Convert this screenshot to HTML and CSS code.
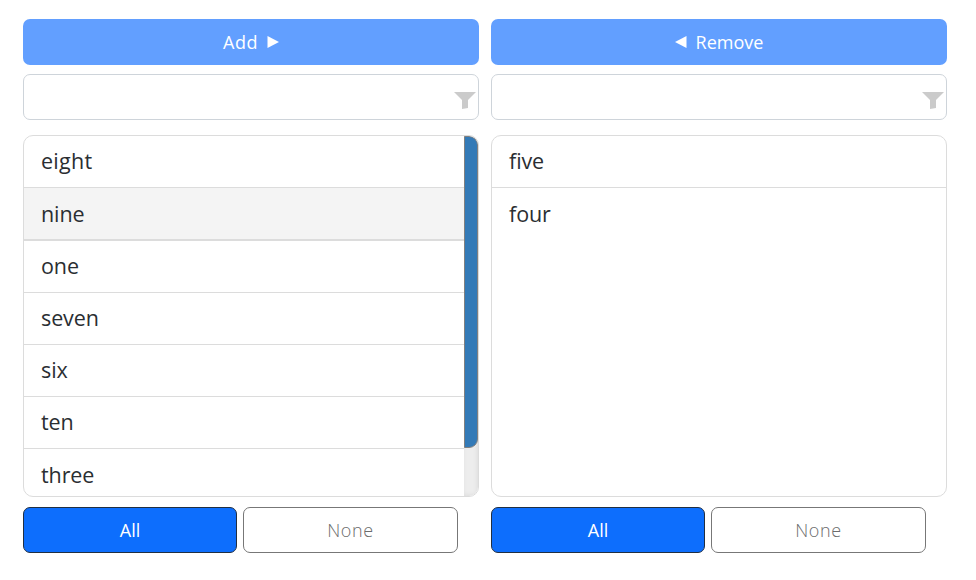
FILE: index.html
```html
<!DOCTYPE html>
<html lang="en">
<head>
<meta charset="utf-8">
<title>List picker</title>
<link rel="stylesheet" href="styles.css">
</head>
<body>
<main class="picker">
  <section class="panel">
    <button class="move"><span class="add-label">Add</span><svg class="arrow" viewBox="0 0 12 12"><path d="M.5 0 12 6 .5 12z"/></svg></button>
    <div class="filter">
      <input class="filter-input" type="text" aria-label="Filter">
      <svg class="funnel" viewBox="0 0 22 17"><path d="M0 0H22L14 8V16L8 17V8z"/></svg>
    </div>
    <div class="list">
      <ul class="items">
        <li class="item wide">eight</li>
        <li class="item active">nine</li>
        <li class="item">one</li>
        <li class="item">seven</li>
        <li class="item">six</li>
        <li class="item">ten</li>
        <li class="item last">three</li>
      </ul>
      <div class="track"><div class="thumb"></div></div>
    </div>
    <div class="actions">
      <button class="choice all">All</button>
      <button class="choice none">None</button>
    </div>
  </section>
  <section class="panel">
    <button class="move"><svg class="arrow" viewBox="0 0 12 12"><path d="M11.5 0 0 6l11.5 6z"/></svg><span>Remove</span></button>
    <div class="filter">
      <input class="filter-input" type="text" aria-label="Filter">
      <svg class="funnel" viewBox="0 0 22 17"><path d="M0 0H22L14 8V16L8 17V8z"/></svg>
    </div>
    <div class="list">
      <ul class="items">
        <li class="item">five</li>
        <li class="item last">four</li>
      </ul>
    </div>
    <div class="actions">
      <button class="choice all">All</button>
      <button class="choice none">None</button>
    </div>
  </section>
</main>
</body>
</html>
```
FILE: styles.css
```css
* { box-sizing: border-box; }
body {
  margin: 0;
  background: #fff;
  color: #2a2e32;
  font-family: "Open Sans", "Noto Sans", sans-serif;
}
.picker {
  display: grid;
  grid-template-columns: 456px 456px;
  column-gap: 12px;
  padding: 19px 23px;
}
.panel { display: flex; flex-direction: column; }
button { font: inherit; font-size: 18px; padding: 0; }
.move {
  display: flex;
  align-items: center;
  justify-content: center;
  gap: 9px;
  height: 46px;
  border: 0;
  border-radius: 7px;
  background: #629fff;
  color: #fff;
}
.add-label { letter-spacing: 0.5px; }
.arrow { width: 12px; height: 12px; fill: #fff; }
.filter {
  display: flex;
  height: 46px;
  margin-top: 9px;
  padding-right: 2px;
  border: 1px solid #ced4da;
  border-radius: 7px;
}
.filter-input {
  flex: 1;
  min-width: 0;
  border: 0;
  outline: 0;
  background: transparent;
}
.funnel { width: 22px; height: 17px; margin-top: 17px; fill: #cbcbcb; }
.list {
  display: flex;
  height: 362px;
  margin-top: 15px;
  border: 1px solid #dcdcdc;
  border-radius: 10px;
  overflow: hidden;
}
.items { flex: 1; margin: 0; padding: 0; list-style: none; }
.item {
  height: 52px;
  padding-left: 17px;
  border-bottom: 1px solid #dcdcdc;
  font-size: 21.5px;
  letter-spacing: -0.1px;
  line-height: 49px;
}
.wide { letter-spacing: 0.3px; }
.active {
  height: 53px;
  border-bottom-width: 2px;
  background: #f4f4f4;
  line-height: 51px;
}
.last { border-bottom: 0; line-height: 51px; }
.track {
  width: 14px;
  background: #ededed;
  box-shadow: inset -1px -1px 4px #ddd;
}
.thumb {
  height: 312px;
  border: 1px solid #808080;
  border-radius: 0 9px 9px 0;
  background: #337ab7;
}
.actions {
  display: grid;
  grid-template-columns: 214px 215px;
  column-gap: 6px;
  margin-top: 10px;
}
.choice { height: 46px; border-radius: 7px; }
.all { border: 1px solid #212f42; background: #0d6efd; color: #fff; }
.none {
  border: 1px solid #777;
  background: #fff;
  color: #6c6c6c;
  font-weight: 300;
  letter-spacing: 0.6px;
}
```
